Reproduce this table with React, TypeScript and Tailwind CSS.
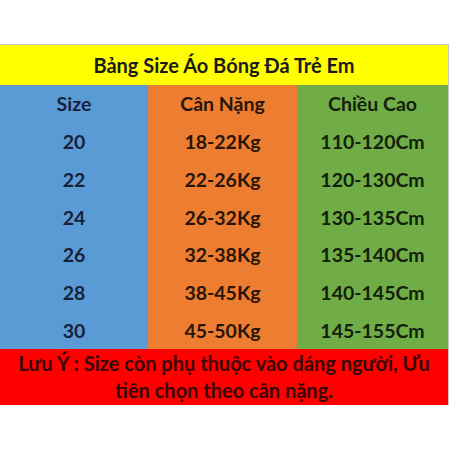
const rows = [
  ['20', '18-22Kg', '110-120Cm'],
  ['22', '22-26Kg', '120-130Cm'],
  ['24', '26-32Kg', '130-135Cm'],
  ['26', '32-38Kg', '135-140Cm'],
  ['28', '38-45Kg', '140-145Cm'],
  ['30', '45-50Kg', '145-155Cm'],
];

export default function App() {
  return (
    <div className="w-[450px] h-[450px] bg-white pt-[44px] font-['Lato',sans-serif] font-bold">
      <div className="w-[449px] border-t border-r border-[#c8c8c0]">
        <div className="h-[40px] bg-[#ffff00] flex items-center justify-center text-[20px] text-[#1b1b1b]">
          Bảng Size Áo Bóng Đá Trẻ Em
        </div>
        <div className="grid grid-cols-[148px_149px_151px] text-[19.5px]">
          <div className="bg-[#5b9bd5] text-[#16213a]">
            <div className="h-[38px] flex items-center justify-center">Size</div>
            {rows.map((r) => (
              <div key={r[0]} className="h-[37.7px] flex items-center justify-center">{r[0]}</div>
            ))}
          </div>
          <div className="bg-[#ed7d31] text-[#2a1608]">
            <div className="h-[38px] flex items-center justify-center">Cân Nặng</div>
            {rows.map((r) => (
              <div key={r[0]} className="h-[37.7px] flex items-center justify-center">{r[1]}</div>
            ))}
          </div>
          <div className="bg-[#70ad47] text-[#13200c]">
            <div className="h-[38px] flex items-center justify-center">Chiều Cao</div>
            {rows.map((r) => (
              <div key={r[0]} className="h-[37.7px] flex items-center justify-center">{r[2]}</div>
            ))}
          </div>
        </div>
        <div className="h-[56px] bg-[#ff0000] text-[#3a0606] text-[20px] leading-[27px] text-center px-2 pt-[1px]">
          Lưu Ý : Size còn phụ thuộc vào dáng người, Ưu tiên chọn theo cân nặng.
        </div>
      </div>
    </div>
  );
}
